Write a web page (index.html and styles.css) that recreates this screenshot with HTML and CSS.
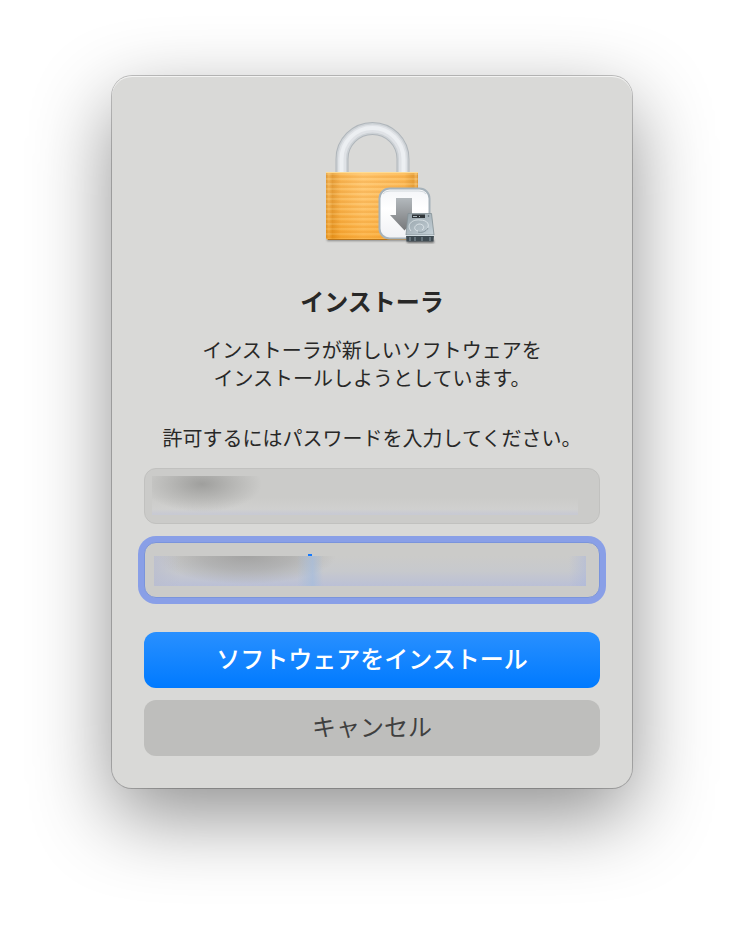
FILE: index.html
```html
<!DOCTYPE html>
<html lang="ja">
<head>
    <meta charset="UTF-8">
    <meta name="viewport" content="width=device-width, initial-scale=1.0">
    <title>インストーラ</title>
    <link rel="stylesheet" href="styles.css">
</head>
<body>
    <form class="dialog">
        <svg class="lock-icon" viewBox="0 0 128 128" aria-hidden="true">
            <defs>
                <linearGradient id="gold" x1="0" x2="1" y1="0" y2="0">
                    <stop offset="0" stop-color="#d98a1c"/>
                    <stop offset="0.03" stop-color="#f3ae45"/>
                    <stop offset="0.07" stop-color="#e0901f"/>
                    <stop offset="0.16" stop-color="#f7ab3c"/>
                    <stop offset="0.4" stop-color="#ffbd5a"/>
                    <stop offset="0.85" stop-color="#fbae3e"/>
                    <stop offset="0.95" stop-color="#e2921f"/>
                    <stop offset="0.98" stop-color="#f4b24f"/>
                    <stop offset="1" stop-color="#cf8215"/>
                </linearGradient>
                <linearGradient id="shade" x1="0" x2="0" y1="0" y2="1">
                    <stop offset="0" stop-color="#fff" stop-opacity="0.1"/>
                    <stop offset="1" stop-color="#f08c00" stop-opacity="0.25"/>
                </linearGradient>
                <pattern id="brushed" width="92" height="5" patternUnits="userSpaceOnUse">
                    <path d="M0 1h92" stroke="#e08a20" stroke-width="1" opacity="0.4"/>
                    <path d="M0 3h92" stroke="#ffe0a0" stroke-width="1" opacity="0.45"/>
                </pattern>
                <linearGradient id="arrow" x1="0" x2="0" y1="0" y2="1">
                    <stop offset="0" stop-color="#b3b9bd"/>
                    <stop offset="1" stop-color="#77787a"/>
                </linearGradient>
                <linearGradient id="paper" x1="0" x2="0" y1="0" y2="1">
                    <stop offset="0" stop-color="#f3f5f8"/>
                    <stop offset="0.4" stop-color="#ffffff"/>
                    <stop offset="1" stop-color="#f0f1f4"/>
                </linearGradient>
                <linearGradient id="drive" x1="0" x2="1" y1="0" y2="1">
                    <stop offset="0" stop-color="#94a1a8"/>
                    <stop offset="1" stop-color="#c5d1d8"/>
                </linearGradient>
                <filter id="soft" x="-10%" y="-200%" width="120%" height="500%">
                    <feGaussianBlur stdDeviation="1"/>
                </filter>
            </defs>
            <!-- shackle -->
            <g fill="none">
                <path d="M34 58V43a30.500 30.500 0 0 1 61 0V58" stroke="#b0b6bb" stroke-width="13"/>
                <path d="M34 58V43a30.500 30.500 0 0 1 61 0V58" stroke="#cdd2d6" stroke-width="11"/>
                <path d="M34 58V43a30.500 30.500 0 0 1 61 0V58" stroke="#dfe2e6" stroke-width="8"/>
                <path d="M33.500 58V43a31 31 0 0 1 62 0V58" stroke="#eceff2" stroke-width="4"/>
            </g>
            <!-- body -->
            <rect x="19" y="122" width="90" height="3" fill="#555" opacity="0.6" filter="url(#soft)"/>
            <path d="M18 56h92v65q0 3-3 3H21q-3 0-3-3z" fill="url(#gold)"/>
            <path d="M18 56h92v65q0 3-3 3H21q-3 0-3-3z" fill="url(#brushed)"/>
            <path d="M18 56h92v65q0 3-3 3H21q-3 0-3-3z" fill="url(#shade)"/>
            <path d="M18 56.500h92" stroke="#ffdc94"/>
            <path d="M20 123.500h88" stroke="#b87418"/>
            <!-- download badge -->
            <rect x="71.500" y="72.500" width="50" height="50" rx="10" fill="url(#paper)" stroke="#a6b2ba" stroke-width="2"/>
            <path d="M75 78q2-3 7-3h29q5 0 7 3" fill="none" stroke="#d3dade"/>
            <path d="M88 82h16v17h7L96.500 114.500 82 99h6z" fill="url(#arrow)"/>
            <!-- hard drive -->
            <rect x="99" y="124" width="27" height="3" fill="#444" opacity="0.7" filter="url(#soft)"/>
            <path d="M100 97.500h23.500l2.500 21.500H98z" fill="url(#drive)" stroke="#849096" stroke-width="0.800"/>
            <rect x="104" y="98.500" width="13" height="3.500" fill="#30363a"/>
            <path d="M105 100.500h4m2 0h1" stroke="#aebbc1"/>
            <circle cx="120.500" cy="100" r="0.800" fill="#56656d"/>
            <g fill="none" stroke="#e2eaee" stroke-width="0.800">
                <path d="M103 115c-5-6 1-12 9-11 8 0 10 5 7 9"/>
                <path d="M110 115c-5-1-4-6 1-7 5 0 6 4 3 6"/>
                <path d="M120 112c-2 4-7 5-10 4" stroke="#77868e"/>
            </g>
            <path d="M98 119h28l-0.500 6.500H98.500z" fill="#3f4b52"/>
            <path d="M98 119.500h28" stroke="#d2dde2"/>
            <path d="M102 121v4m5-4v4m7-4v4m8-4v4" stroke="#8a9aa2"/>
        </svg>

        <h1>インストーラ</h1>
        <p class="message">インストーラが新しいソフトウェアを<br>インストールしようとしています。</p>
        <p class="prompt">許可するにはパスワードを入力してください。</p>

        <input class="field user" type="text" aria-label="ユーザ名">
        <div class="password-box">
            <input class="field password" type="password" aria-label="パスワード">
            <span class="caret"></span>
        </div>

        <button class="btn install" type="submit">ソフトウェアをインストール</button>
        <button class="btn cancel" type="button">キャンセル</button>
    </form>
</body>
</html>
```
FILE: styles.css
```css
* {
    box-sizing: border-box;
}

body {
    margin: 0;
    min-height: 100vh;
    padding: 76px 24px 60px;
    background-color: #ffffff;
    color: #282827;
    font-family: "Noto Sans CJK JP", sans-serif;
    font-size: 20px;
    line-height: 28px;
}

.dialog {
    display: flex;
    flex-direction: column;
    width: 100%;
    max-width: 520px;
    margin: 0 auto;
    padding: 40px 32px 32px;
    background-color: #d9d9d7;
    border-radius: 20px;
    text-align: center;
    box-shadow:
        inset 0 1px 0 #f3f3f2,
        0 0 0 1px rgba(0, 0, 0, 0.22),
        0 28px 80px rgba(0, 0, 0, 0.44);
}

.lock-icon {
    width: 128px;
    height: 128px;
    align-self: center;
}

h1 {
    margin: 43px 0 21px;
    font-size: 24px;
    font-weight: 700;
}

p {
    margin: 0;
    font-weight: 400;
}

.prompt {
    margin: 32px 0 16px;
}

.field {
    display: block;
    width: 100%;
    height: 56px;
    padding: 0 12px;
    border: 1px solid #c1c1bf;
    border-radius: 12px;
    background-color: #cbcbc9;
    background-repeat: no-repeat;
    font: inherit;
    outline: none;
}

/* contents of both fields are smudged out */
.user {
    background-image:
        radial-gradient(ellipse 60px 28px at 50px 8px, rgba(140, 140, 138, 0.7), rgba(150, 150, 148, 0.4) 50%, transparent),
        linear-gradient(rgba(203, 203, 201, 0) 55%, #d0d0cf 85%, #c8cad3 97%);
    background-size: 120px 39px, calc(100% - 28px) 39px;
    background-position: 7px 7px;
}

.password-box {
    position: relative;
    margin: 18px 0 34px;
}

.password {
    border-color: #7a94dc;
    background-image:
        linear-gradient(90deg, transparent 96%, rgba(170, 182, 220, 0.5)),
        linear-gradient(90deg, transparent, rgba(165, 188, 220, 0.7) 60%, transparent),
        linear-gradient(90deg, rgba(186, 190, 208, 0.8), transparent),
        radial-gradient(ellipse 90px 28px at 92px 0, rgba(150, 150, 150, 0.75), rgba(155, 155, 155, 0.5) 50%, transparent),
        linear-gradient(#cbcbc9, #c7c9cd 50%, #bbc0d6);
    background-size: calc(100% - 22px) 30px, 26px 30px, 26px 30px, 184px 30px, calc(100% - 22px) 30px;
    background-position: 9px 13px, 152px 13px, 9px 13px, 9px 13px, 9px 13px;
    box-shadow: 0 0 0 6px #899fe7;
}

.caret {
    position: absolute;
    left: 164px;
    top: 12px;
    width: 4px;
    height: 2px;
    background-color: #147aff;
}

.btn {
    width: 100%;
    height: 56px;
    padding: 0 16px 4px;
    border: none;
    border-radius: 12px;
    font-family: inherit;
    font-size: 24px;
    font-weight: 500;
    line-height: 28px;
    cursor: pointer;
}

.install {
    margin-bottom: 12px;
    background: linear-gradient(#2990ff, #007aff);
    color: #ffffff;
}

.cancel {
    background-color: #bebebc;
    color: #40403f;
    font-weight: 400;
}
```
